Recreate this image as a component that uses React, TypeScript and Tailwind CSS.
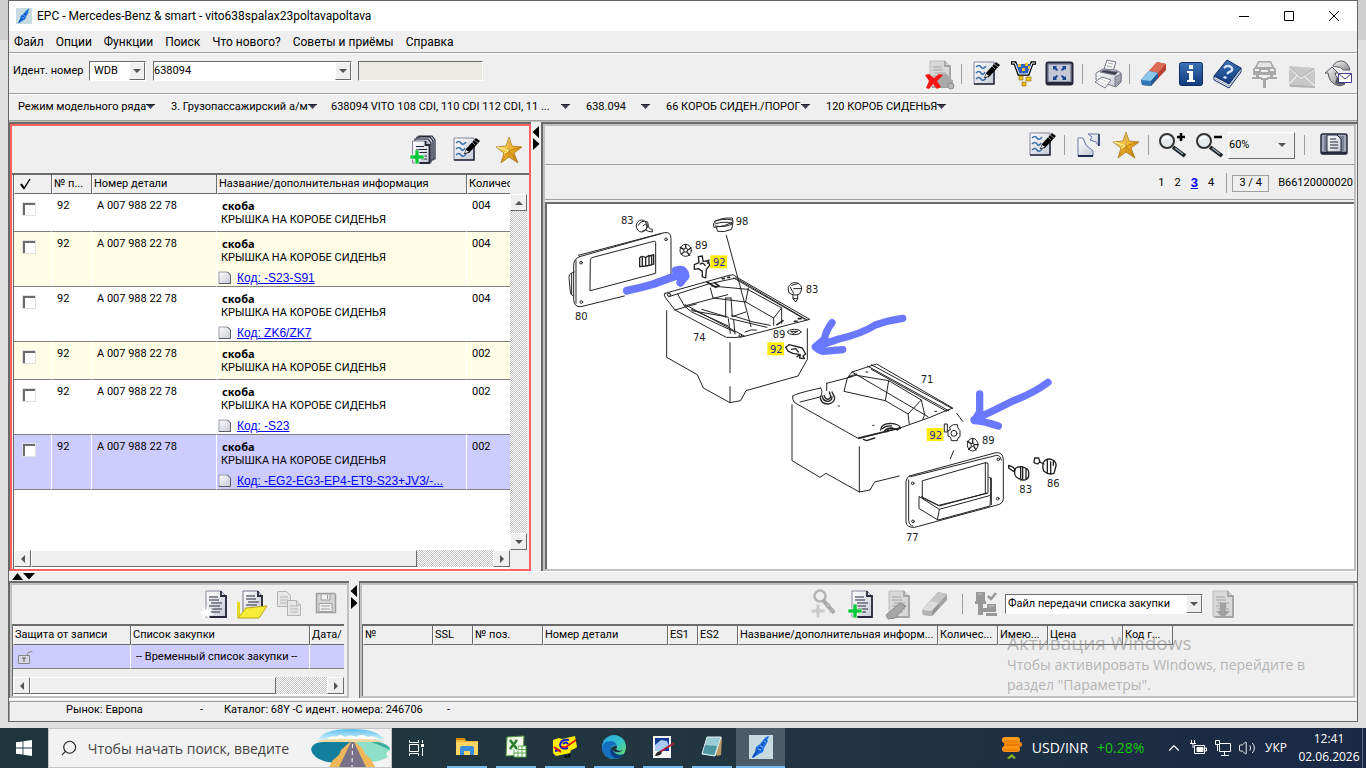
import type { ReactNode } from "react";
import { ChevronUp, Search, Volume2 } from "lucide-react";

const INK = "#26283a";

const parts = [
  { code: "", qty: "004", tone: "bg-white" },
  { code: "Код: -S23-S91", qty: "004", tone: "bg-[#fffde6]" },
  { code: "Код: ZK6/ZK7", qty: "004", tone: "bg-white" },
  { code: "", qty: "002", tone: "bg-[#fffde6]" },
  { code: "Код: -S23", qty: "002", tone: "bg-white" },
  { code: "Код: -EG2-EG3-EP4-ET9-S23+JV3/-...", qty: "002", tone: "bg-[#ccccff]" },
];

const crumbs = [
  { text: "Режим модельного ряда", width: "w-[137px]" },
  { text: "3. Грузопассажирский а/м", width: "w-[144px]" },
  { text: "638094 VITO 108 CDI, 110 CDI 112 CDI, 11 ...", width: "w-[239px]" },
  { text: "638.094", width: "w-16" },
  { text: "66 КОРОБ СИДЕН./ПОРОГ", width: "w-[144px]" },
  { text: "120 КОРОБ СИДЕНЬЯ", width: "w-[119px]" },
];

const orderColumns = [
  { text: "№", width: "w-[70px]" },
  { text: "SSL", width: "w-10" },
  { text: "№ поз.", width: "w-[70px]" },
  { text: "Номер детали", width: "w-[125px]" },
  { text: "ES1", width: "w-[30px]" },
  { text: "ES2", width: "w-10" },
  { text: "Название/дополнительная информ...", width: "w-[200px]" },
  { text: "Количес...", width: "w-[60px]" },
  { text: "Имею...", width: "w-[50px]" },
  { text: "Цена", width: "w-[75px]" },
  { text: "Код г...", width: "w-[50px]" },
];

export default function App() {
  return (
    <div className="flex h-screen min-h-[640px] flex-col overflow-hidden bg-[linear-gradient(#cfcfcf_40px,#e0e0e0_40px)] font-['Roboto','Noto_Sans',sans-serif] text-[11px] leading-[14px] text-black">
      <Defs />
      <div className="flex min-h-0 flex-1 flex-col px-2 pb-[6px]">
        <div className="flex min-h-0 flex-1 flex-col border border-[#666] bg-[#efefef]">
          <TitleBar />
          <MenuBar />
          <MainToolbar />
          <Crumbs />
          <div className="flex min-h-0 flex-1 border-t border-[#c0c0c0]">
            <PartsPanel />
            <SplitterV />
            <ImagePanel />
          </div>
          <SplitterH />
          <div className="flex h-[117px] shrink-0">
            <ListsPanel />
            <SplitterV />
            <OrderPanel />
          </div>
          <StatusBar />
        </div>
      </div>
      <Taskbar />
    </div>
  );
}

function TitleBar() {
  return (
    <header className="flex h-[30px] shrink-0 items-center bg-white pl-[7px] text-[12px]">
      <span className="bg-[#c5dbe0]">
        <PenIcon size={16} />
      </span>
      <h1 className="pl-[5px]">EPC - Mercedes-Benz &amp; smart - vito638spalax23poltavapoltava</h1>
      <div className="ml-auto flex">
        <button aria-label="Свернуть" className="grid h-[30px] w-[45px] place-items-center">
          <svg width="11" height="11" stroke="#000"><path d="M0 5.5h10" /></svg>
        </button>
        <button aria-label="Развернуть" className="grid h-[30px] w-[45px] place-items-center">
          <svg width="11" height="11" fill="none" stroke="#000"><path d="M.5.5h9v9h-9z" /></svg>
        </button>
        <button aria-label="Закрыть" className="grid h-[30px] w-[45px] place-items-center">
          <svg width="11" height="11" stroke="#000"><path d="M0 0l10 10M10 0L0 10" /></svg>
        </button>
      </div>
    </header>
  );
}

function MenuBar() {
  return (
    <nav className="flex h-[22px] shrink-0 items-center gap-3 border-b border-[#a0a0a0] pl-[5px] text-[12px]">
      {["Файл", "Опции", "Функции", "Поиск", "Что нового?", "Советы и приёмы", "Справка"].map((m) => (
        <button key={m}>{m}</button>
      ))}
    </nav>
  );
}

function MainToolbar() {
  return (
    <div className="flex h-[41px] shrink-0 items-center justify-between border-b border-t border-b-[#a0a0a0] border-t-white pl-1">
      <div className="flex items-center pb-[5px]">
        <label htmlFor="wmi" className="w-[76px]">Идент. номер</label>
        <Combo id="wmi" value="WDB" width="w-[57px]" pad="pl-1" />
        <span className="w-[7px]" />
        <Combo id="vin" value="638094" width="w-[199px]" pad="pl-0" />
        <input aria-label="Результат" readOnly className="ml-[6px] h-5 w-[125px] border border-b-white border-l-[#6b6b6b] border-r-white border-t-[#6b6b6b] bg-[#ebebe4]" />
      </div>
      <div className="flex items-center">
        <Tool label="Удалить"><DocIcon muted car /></Tool>
        <Sep />
        <Tool label="Заметки"><NoteIcon /></Tool>
        <Tool label="Корзина"><CartIcon /></Tool>
        <Tool label="Во весь экран"><FullscreenIcon /></Tool>
        <Sep />
        <Tool label="Печать"><PrinterIcon /></Tool>
        <Sep />
        <Tool label="Стереть"><EraserIcon /></Tool>
        <Tool label="Информация"><InfoIcon /></Tool>
        <Tool label="Помощь"><BookIcon /></Tool>
        <Tool label="Автомобиль"><LiftIcon /></Tool>
        <Tool label="Письмо"><MailIcon /></Tool>
        <Tool label="Обновить"><SyncIcon /></Tool>
      </div>
    </div>
  );
}

function Crumbs() {
  return (
    <nav className="flex h-[27px] shrink-0 items-center gap-4 border-b border-t border-b-[#a0a0a0] border-t-white pb-[2px] pl-[9px]">
      {crumbs.map((c) => (
        <button key={c.text} className={`flex items-center justify-between whitespace-nowrap ${c.width}`}>
          <span>{c.text}</span>
          <svg width="9" height="5" className="shrink-0"><path d="M0 0h9L4.500 5z" fill="#3a3a55" /><path d="M0 .5h9" stroke="#222" /></svg>
        </button>
      ))}
    </nav>
  );
}

function Combo({ id, value, width, pad }: { id: string; value: string; width: string; pad: string }) {
  return (
    <span className={`flex h-5 border border-b-white border-l-[#6b6b6b] border-r-white border-t-[#6b6b6b] bg-white ${width}`}>
      <select id={id} aria-label={value} className={`min-w-0 flex-1 appearance-none bg-white outline-none ${pad}`}>
        <option>{value}</option>
      </select>
      <span className="grid w-4 place-items-center border border-b-[#6b6b6b] border-l-white border-r-[#6b6b6b] border-t-white bg-[#efefef]">
        <svg width="8" height="4"><path d="M0 0h8L4 4z" fill="#555" /></svg>
      </span>
    </span>
  );
}

function Tool({ label, children }: { label: string; children: ReactNode }) {
  return (
    <button aria-label={label} className="grid h-8 w-[37px] shrink-0 place-items-center">
      {children}
    </button>
  );
}

function Sep() {
  return <span className="mr-[5px] ml-1 h-5 w-px shrink-0 bg-[#a0a0a0]" />;
}

function SplitterV() {
  return (
    <div className="w-[10px] shrink-0 bg-[#efefef] pt-1">
      <svg width="10" height="26"><path d="M8 0v12L1.500 6zM2 12v12L8.500 18z" /></svg>
    </div>
  );
}

function SplitterH() {
  return (
    <div className="flex h-[10px] shrink-0 items-center border-t border-white pl-[3px]">
      <svg width="24" height="7"><path d="M0 7h11L5.500 0zM11 0h12L17 6.500z" /></svg>
    </div>
  );
}

function ScrollButton({ d }: { d: string }) {
  return (
    <button aria-label="Прокрутка" className="grid h-[17px] w-[17px] shrink-0 place-items-center border border-b-[#6b6b6b] border-l-white border-r-[#6b6b6b] border-t-white bg-[#efefef]">
      <svg width="8" height="8"><path d={d} fill="#555" /></svg>
    </button>
  );
}

function ScrollH({ thumb }: { thumb: string }) {
  return (
    <div className="flex h-[17px] min-w-0 flex-1 bg-[repeating-conic-gradient(#c4c4c4_0_25%,#fff_0_50%)] bg-[length:2px_2px]">
      <ScrollButton d="M6 0v8L2 4z" />
      <span className={`border border-b-[#6b6b6b] border-l-white border-r-[#6b6b6b] border-t-white bg-[#efefef] ${thumb}`} />
      <span className="flex-1" />
      <ScrollButton d="M2 0v8l4-4z" />
    </div>
  );
}

const th = "h-[19px] overflow-hidden whitespace-nowrap border-b border-l border-r border-b-[#6b6b6b] border-l-white border-r-[#6b6b6b] bg-[#efefef] p-0 pl-[1px] text-left font-normal";

function PartsPanel() {
  return (
    <section className="flex w-[522px] shrink-0 flex-col border-l border-t-2 border-[#6b6b6b]">
      <div className="flex min-h-0 flex-1 flex-col border-2 border-[#ff6060]">
        <div className="flex h-[47px] shrink-0 items-center justify-end gap-[6px] pr-[2px]">
          <Tool label="Добавить"><DocIcon stack plus /></Tool>
          <Tool label="Заметки"><NoteIcon /></Tool>
          <Tool label="Избранное"><StarIcon /></Tool>
        </div>
        <div className="flex min-h-0 flex-1 border-t-2 border-[#6b6b6b] pl-px pr-[2px]">
          <div className="flex min-h-0 min-w-0 flex-1 flex-col border-l border-[#6b6b6b]">
            <div className="min-h-0 flex-1 overflow-hidden bg-white">
              <table className="w-full table-fixed border-separate border-spacing-0">
                <colgroup>
                  <col className="w-[38px]" />
                  <col className="w-10" />
                  <col className="w-[125px]" />
                  <col className="w-[250px]" />
                  <col />
                </colgroup>
                <thead>
                  <tr>
                    <th className={th} aria-label="Выбор">
                      <svg width="12" height="12" className="ml-1" fill="none" stroke="#000"><path d="M1 6.500l3 4L10 1" strokeWidth="1.400" /><path d="M1 6l3 4" strokeWidth="2" /></svg>
                    </th>
                    <th className={th}>№ п...</th>
                    <th className={th}>Номер детали</th>
                    <th className={th}>Название/дополнительная информация</th>
                    <th className={`${th} border-r-0`}>Количес</th>
                  </tr>
                </thead>
                <tbody>
                  {parts.map((p, i) => (
                    <tr key={i} className={`align-top ${p.tone}`}>
                      <td className="border-b border-r border-b-[#808080] border-r-white pl-[9px] pt-[9px]">
                        <input type="checkbox" aria-label={`Деталь ${i + 1}`} className="block h-3 w-3 appearance-none border-l-2 border-t-2 border-[#6b6b6b] bg-white outline outline-[#e0e0e0]" />
                      </td>
                      <td className="border-b border-r border-b-[#808080] border-r-white pl-[5px] pt-[5px]">92</td>
                      <td className="border-b border-r border-b-[#808080] border-r-white pl-[5px] pt-[5px]">A 007 988 22 78</td>
                      <td className="border-b border-r border-b-[#808080] border-r-white pt-[5px]">
                        <div className="pl-[5px] font-['Noto_Sans',sans-serif] font-bold">скоба</div>
                        <div className="whitespace-nowrap pl-[4px] pb-[4px]">КРЫШКА НА КОРОБЕ СИДЕНЬЯ</div>
                        {p.code && (
                          <div className="mt-px flex h-4 items-center gap-[5px] pl-[1px] font-['Liberation_Sans',Arial,sans-serif] text-[12px]">
                            <PageIcon />
                            <a href="#code" className="text-[#0000ff] underline">{p.code}</a>
                          </div>
                        )}
                      </td>
                      <td className="border-b border-b-[#808080] pl-[5px] pt-[5px]">{p.qty}</td>
                    </tr>
                  ))}
                </tbody>
              </table>
            </div>
            <div className="flex shrink-0 border-b-2 border-white">
              <ScrollH thumb="w-[386px]" />
            </div>
          </div>
          <div className="flex w-[17px] flex-col pt-[19px]">
            <div className="flex flex-1 flex-col justify-between bg-[repeating-conic-gradient(#c4c4c4_0_25%,#fff_0_50%)] bg-[length:2px_2px]">
              <ScrollButton d="M0 6h8L4 2z" />
              <ScrollButton d="M0 2h8L4 6z" />
            </div>
            <div className="h-[19px]" />
          </div>
        </div>
      </div>
    </section>
  );
}

function ImagePanel() {
  return (
    <section className="flex min-w-0 flex-1 flex-col border-l-2 border-t-2 border-[#6b6b6b] pr-px">
      <div className="flex min-h-0 flex-1 flex-col border-2 border-[#c0c0c0]">
        <div className="flex h-[39px] shrink-0 items-center justify-end border-b border-[#a0a0a0] pr-[2px]">
          <Tool label="Заметки"><NoteIcon /></Tool>
          <Sep />
          <Tool label="Перейти"><JumpIcon /></Tool>
          <Tool label="Избранное"><StarIcon /></Tool>
          <Sep />
          <Tool label="Увеличить"><LensIcon plus /></Tool>
          <Tool label="Уменьшить"><LensIcon /></Tool>
          <span className="flex h-[27px] w-[67px] items-center border border-b-[#6b6b6b] border-l-white border-r-[#6b6b6b] border-t-white bg-[#efefef] pr-2">
            <select aria-label="Масштаб" className="min-w-0 flex-1 appearance-none bg-[#efefef] outline-none">
              <option>60%</option>
            </select>
            <svg width="8" height="4"><path d="M0 0h8L4 4z" fill="#555" /></svg>
          </span>
          <span className="w-[5px]" />
          <Sep />
          <span className="w-[5px]" />
          <Tool label="Просмотр"><PreviewIcon /></Tool>
        </div>
        <div className="flex h-[35px] shrink-0 items-center justify-end border-b border-[#a0a0a0] pr-px pt-[2px]">
          <nav className="flex items-center gap-[10px]">
            <a href="#p1">1</a>
            <a href="#p2">2</a>
            <a href="#p3" className="font-['Liberation_Sans',Arial,sans-serif] text-[13px] font-bold text-[#0000ff] underline">3</a>
            <a href="#p4">4</a>
          </nav>
          <span className="ml-3 h-5 w-px bg-[#a0a0a0]" />
          <span className="ml-[5px] grid h-[17px] w-[37px] place-items-center border border-[#a0a0a0]">3 / 4</span>
          <span className="ml-[9px] min-w-[73px]">B66120000020</span>
        </div>
        <div className="mt-[2px] min-h-0 flex-1 overflow-hidden border-l-2 border-t-2 border-[#6b6b6b] bg-white">
          <Drawing />
        </div>
      </div>
    </section>
  );
}

function Label({ x, y, children, hot }: { x: number; y: number; children: string; hot?: boolean }) {
  return (
    <>
      {hot && <rect x={x - 8} y={y - 33} width="50" height="39" fill="#ffee00" stroke="none" />}
      <text x={x} y={y} fontSize="30" fill={hot ? "#2626b0" : "#222"} stroke="none">{children}</text>
    </>
  );
}

function Drawing() {
  return (
    <svg width="520" height="352" viewBox="0 0 520 352" fill="none" stroke="#222" strokeLinejoin="round" strokeLinecap="round" className="font-['DejaVu_Sans',sans-serif]">
      {/* upper box with its cover, drawn three times larger */}
      <g transform="translate(-2 -4) scale(.33333)" strokeWidth="3">
        <path d="M104 170L358 98q20-4 20 18v116M104 170q-18 6-18 26v104q2 22 22 20l130-32M100 166L350 100M88 216l-10 4q-6 2-6 12l4 44q0 10 10 12M93 180v130M80 222v60" />
        <path d="M136 180q0-6 8-8l182-48q6-2 6 4v92l-196 52z" />
        <circle cx="108" cy="188" r="4" /><circle cx="363" cy="118" r="4" /><circle cx="109" cy="306" r="4" /><circle cx="372" cy="230" r="2" />
        <path d="M284 174q4-6 10-4l8 2v26l-18 2zM304 172l8-6v30l-8 2M314 168l12-4v28l-12 4M292 174v22M320 168v22" strokeWidth="4" />
        <ellipse cx="290" cy="78" rx="16" ry="18" /><path d="M280 76q8-18 28-10l2 12q-6 14-18 16M294 78q8-10 14-2l6 10 8 2v8l-12-2-8-4" />
        <ellipse cx="422" cy="151" rx="17" ry="18" /><circle cx="422" cy="150" r="6" /><path d="M422 144v-10M428 150l10-6M426 156l8 10M417 156l-8 6M416 148l-10-6" strokeWidth="4" />
        <path d="M462 188l-2-18 12-2 2 16 16-2 4 14-10 12-2 26-10-4v-16l-12-8-12 2v-14zM466 192q8-6 14 4M484 184l8-4-4 10" strokeWidth="4" />
        <path d="M506 70q14-18 56-16l2 12q-24 14-56 16zM508 64q24-10 54-4M510 72q26-10 52-2M514 82l4 12q20 4 42-6l4-20M512 78q24 6 50-6" />
        <path d="M544 106L618 380" />
        <path d="M730 262q6-16 24-14 18 6 16 20l-6 14q-18 8-32-4zM736 262l10 18M746 266h24M740 256l20-6M744 286v10l8 10 6-10v-12M744 296h14" />
        <path d="M360 280L552 226q14-6 24 6L794 358 594 410q-24 4-50 2L390 330 362 294q-8-10-2-14zM372 290L490 252l84-18M390 330l64-18M576 236L786 360M566 234L780 358" />
        <path d="M398 282l20 36 130-34M496 264l8 30 98 12 8-42M500 258l108 10M602 306l84 48 24-30-102-56M686 354v22M710 324v46M420 314l178 94M418 318l22 18 130 60M440 328l110 50M542 294v58M558 294l4 56M542 294h16M550 352l-80-24M562 350l40-14M556 356l110 26M560 346l64 20 52 10M550 356l6 44M566 360l4 42M544 350l-104-18M600 396q20-10 34-6" />
        <path d="M486 246l26 16 10-4-14-10M696 374l18-12M748 364h8M760 356h8M532 236h6M548 232h6" strokeWidth="5" />
        <circle cx="372" cy="284" r="5" /><circle cx="586" cy="408" r="4" />
        <path d="M365 332v140l92 52 18 40 80 44 32-6 16-30 156-44 28-50V386M555 428v90M555 560v48" />
        <ellipse cx="748" cy="396" rx="20" ry="8" /><path d="M738 394h20l-12 6z" />
        <path d="M722 442l10-8 40 10 10 18-8 6 4 8-14-2 2-10-22-4-14-6zM740 448l12-2 8 10M762 466l-6 4" strokeWidth="4" />
        <path d="M246 272q40-8 80-20 50-20 94-32M392 212q18-6 24 2l6 14-16 20" stroke="#6a78ff" strokeWidth="24" />
        <Label x={228} y={72}>83</Label><Label x={572} y={74}>98</Label><Label x={450} y={146}>89</Label>
        <Label x={504} y={199} hot>92</Label><Label x={782} y={278}>83</Label><Label x={90} y={360}>80</Label>
        <Label x={444} y={423}>74</Label><Label x={683} y={415}>89</Label><Label x={675} y={460} hot>92</Label>
      </g>
      {/* lower box, its frame and both pointer arrows */}
      <g transform="translate(233 76) scale(.33333)" strokeWidth="3">
        <path d="M38 348q2-6 84-24M140 310l76-20M38 348q-2 12 6 20L236 476 360 444 450 412 518 384 290 252 216 276 202 294M60 366L116 352M262 258L506 392M274 254L518 386M274 268L500 394M216 276L444 410M140 310v22M122 324q8 8 0 26" />
        <path d="M120 350q2 22 24 22 20-2 20-20l-8-16M126 348q4 16 18 16 12-2 12-14M132 346q4 12 12 12 8-2 8-10l-4-12" strokeWidth="4" />
        <path d="M302 450q2-20 30-20 26 2 30 14l-10 6q-12-8-26-4l-6 10M308 446q8-10 26-8M314 452q8-10 24-8M236 474l124-30M250 478l10 4 24-8" strokeWidth="4" />
        <path d="M202 294L192 334 316 362 326 302 230 286zM316 362L384 402 424 360 326 302M384 402l4 30M424 360l10 44-6 14M174 378h4M278 436h4M258 276h6M464 394h6M206 290l24-8" />
        <path d="M36 374v168l84 50 18-12 100 56 32-6 14-24 74-18M238 500v136M530 400l18 24M521 512l-10 24" />
        <path d="M494 432h8v24h-8zM510 440l10-6h12l2 10 6 8v18l-6 4-2 8h-18l-2-10-8-4v-16l6-2z" /><circle cx="522" cy="460" r="9" />
        <ellipse cx="578" cy="494" rx="16" ry="19" /><circle cx="578" cy="494" r="5" /><path d="M578 489v-12M584 494h10M582 500l6 10M574 500l-8 8M572 490l-10-6" strokeWidth="4" />
        <path d="M388 588L648 518q20-2 22 20v118q0 16-22 20L404 742q-24 2-26-16V604q2-12 10-16zM386 600v120q2 18 12 18M392 590L650 526q12 0 14 14" />
        <circle cx="398" cy="610" r="4" /><circle cx="655" cy="538" r="4" /><circle cx="399" cy="724" r="4" /><circle cx="653" cy="656" r="4" />
        <path d="M428 602L616 548l8 2v88L478 678 428 654zM616 548v90M418 650l60 38 154-42-2 32-156 42-56-34zM478 688l-6 32M632 646V594l-6-2M634 594v80M424 650l52 26 146-36" />
        <path d="M686 556l14 6 6 8-6 4-14-10zM704 570q4-12 22-10 20 6 20 16v14q-6 12-18 10-22-6-24-18zM722 560v40M738 566v32M728 560v40" strokeWidth="4" />
        <path d="M764 534h12l4 12-8 6-10-4zM778 546l14 6M790 548q8-14 24-10 16 6 14 20l-6 22q-16 6-30-6-6-10-2-26zM802 540v40M812 546v34M820 544v12" strokeWidth="4" />
        <g stroke="#6a78ff" strokeWidth="22">
          <path d="M368 115q-44 6-82 20-40 26-110 42l-70 24M156 128q-20 26-22 48l-28 24q10 12 24 14l58-5" />
          <path d="M804 307q-46 34-106 56-50 26-116 56M599 342v54l-16 26q30 2 72 16" />
        </g>
        <Label x={422} y={310}>71</Label><Label x={448} y={477} hot>92</Label><Label x={606} y={491}>89</Label>
        <Label x={718} y={640}>83</Label><Label x={801} y={622}>86</Label><Label x={378} y={784}>77</Label>
      </g>
    </svg>
  );
}

function ListsPanel() {
  return (
    <section className="flex w-[340px] shrink-0 flex-col border-l border-t-2 border-[#6b6b6b]">
      <div className="flex min-h-0 flex-1 flex-col border-2 border-[#c0c0c0] pr-[3px]">
        <div className="flex h-[39px] shrink-0 items-center justify-end pb-[2px]">
          <Tool label="Новый список"><DocIcon spark /></Tool>
          <Tool label="Открыть список"><FolderIcon /></Tool>
          <Tool label="Копировать"><CopyIcon /></Tool>
          <Tool label="Сохранить"><FloppyIcon /></Tool>
        </div>
        <div className="flex min-h-0 flex-1 flex-col border-l border-t-2 border-[#6b6b6b]">
          <table className="w-full table-fixed border-separate border-spacing-0">
            <colgroup>
              <col className="w-[118px]" />
              <col className="w-[179px]" />
              <col />
            </colgroup>
            <thead>
              <tr>
                <th className={th}>Защита от записи</th>
                <th className={th}>Список закупки</th>
                <th className={`${th} border-r-0`}>Дата/</th>
              </tr>
            </thead>
            <tbody>
              <tr className="bg-[#ccccff]">
                <td className="h-6 border-b border-r border-b-[#808080] border-r-white pl-1">
                  <svg width="17" height="14" fill="#d8d8e8" stroke="#888"><path d="M1.500 5.500h11v8h-11z" /><path d="M10.500 5V3.500q0-2 5-2" fill="none" /><path d="M5 8h4M7 8v4" stroke="#555" /></svg>
                </td>
                <td className="h-6 whitespace-nowrap border-b border-r border-b-[#808080] border-r-white pl-[5px]">-- Временный список закупки --</td>
                <td className="h-6 border-b border-b-[#808080]" />
              </tr>
            </tbody>
          </table>
          <div className="mt-auto flex border-b-2 border-white">
            <ScrollH thumb="w-[246px]" />
          </div>
        </div>
      </div>
    </section>
  );
}

function OrderPanel() {
  return (
    <section className="flex min-w-0 flex-1 flex-col border-l border-t-2 border-[#6b6b6b] pr-[2px]">
      <div className="relative flex min-h-0 flex-1 flex-col border-2 border-[#c0c0c0]">
        <div className="flex h-[39px] shrink-0 items-center pl-[443px] pb-[2px]">
          <Tool label="Ключ"><KeyIcon /></Tool>
          <Tool label="Добавить позицию"><DocIcon plus /></Tool>
          <Tool label="Стереть позицию"><DocIcon muted eraser /></Tool>
          <Tool label="Стереть всё"><EraserIcon muted /></Tool>
          <span className="w-[5px]" />
          <Sep />
          <Tool label="Передача"><TransferIcon /></Tool>
          <Combo id="transfer" value="Файл передачи списка закупки" width="w-[198px]" pad="pl-[2px]" />
          <Tool label="Выгрузить"><DocIcon muted arrow /></Tool>
        </div>
        <div className="min-h-0 flex-1 border-l border-t-2 border-[#6b6b6b]">
          <table className="w-[810px] table-fixed border-separate border-spacing-0">
            <thead>
              <tr>
                {orderColumns.map((c) => (
                  <th key={c.text} className={`${th} ${c.width}`}>{c.text}</th>
                ))}
              </tr>
            </thead>
          </table>
        </div>
        <aside className="absolute right-[44px] top-[46px] w-[302px] whitespace-nowrap font-['Open_Sans',sans-serif] text-[14px] leading-5 text-[#8a8a8a]/60">
          <div className="text-[19px] leading-6">Активация Windows</div>
          <div>Чтобы активировать Windows, перейдите в</div>
          <div>раздел "Параметры".</div>
        </aside>
      </div>
    </section>
  );
}

function StatusBar() {
  return (
    <footer className="flex h-[23px] shrink-0 items-center border-t-2 border-white">
      <div className="flex h-5 flex-1 items-center border-l border-t border-[#a0a0a0] pb-[2px] pl-14">
        <span className="w-[134px]">Рынок: Европа</span>
        <span className="w-6">-</span>
        <span className="w-[223px]">Каталог: 68Y -C идент. номера: 246706</span>
        <span>-</span>
      </div>
    </footer>
  );
}

function TaskItem({ label, active, children }: { label: string; active?: boolean; children: ReactNode }) {
  return (
    <button aria-label={label} className={`flex h-10 w-[49px] flex-col items-center justify-between ${active ? "bg-[#4a5c68]" : ""}`}>
      <span className="grid flex-1 place-items-center">{children}</span>
      <span className={`h-[2px] bg-[#76b9ed] ${active ? "w-full" : "w-10"}`} />
    </button>
  );
}

function Taskbar() {
  return (
    <footer className="flex h-10 shrink-0 items-center bg-linear-to-r from-[#1f353d] via-[#213640] to-[#1a2845] font-['Open_Sans',sans-serif] text-white">
      <button aria-label="Пуск" className="grid h-10 w-12 place-items-center">
        <svg width="16" height="16" fill="#fff"><path d="M0 2.300L6.600 1.400v6.200H0zM7.400 1.300L16 0v7.600H7.400zM0 8.400h6.600v6.200L0 13.700zM7.400 8.400H16V16l-8.600-1.300z" /></svg>
      </button>
      <label className="flex h-10 w-[344px] items-center border border-[#c4c4c4] bg-[#f2f2f2] pl-[11px] text-[#222]">
        <Search size={18} strokeWidth={1.5} className="-scale-x-100" />
        <input placeholder="Чтобы начать поиск, введите" className="ml-[10px] w-[225px] bg-transparent text-[14px] outline-none placeholder:text-[#444]" />
        <RoadIcon />
      </label>
      <button aria-label="Представление задач" className="grid h-10 w-12 place-items-center">
        <svg width="17" height="16" fill="none" stroke="#fff"><path d="M1.500 4.500h9v7h-9zM1.500 0v2.500h9V0M1.500 16v-2.500h9V16M14.500 0v3M14.500 8v8" /><path d="M13 4h3v3h-3z" fill="#fff" stroke="none" /></svg>
      </button>
      <div className="flex pl-[2px]">
        <TaskItem label="Проводник">
          <svg width="22" height="20"><path d="M0 1h8l2 3h12v14H0z" fill="#f5b83d" /><path d="M0 1h8l2 2H0z" fill="#d98a00" /><path d="M0 5h22v13H0z" fill="#ffd563" /><path d="M4 18v-7q0-2 2-2h10q2 0 2 2v7h-4v-4H8v4z" fill="#3a8fdc" /></svg>
        </TaskItem>
        <TaskItem label="Excel">
          <svg width="24" height="24"><path d="M3 2l17-1-1 19-17 1z" fill="#f4faf0" stroke="#4c9a3c" /><path d="M10 11h12v11H10z" fill="#fff" stroke="#5aa84a" /><path d="M10 14.500h12M10 18h12M14 11v11M18 11v11" stroke="#5aa84a" /><path d="M5 4h9v11H5z" fill="#dff0d8" /><path d="M6 5l7 9M13 5l-7 9" stroke="#2e7d32" strokeWidth="2.500" /></svg>
        </TaskItem>
        <TaskItem label="Каталог">
          <svg width="26" height="24"><path d="M1 5l6-2 3 1 13-3 2 11-3 2-3 1-1 3-14 3-3-3z" fill="#ffee00" /><path d="M3 13l5 3M3 16l4-1M17 5q-8-1-9 5 1 5 8 3M11 9q3-3 5 0" fill="none" stroke="#1414e0" strokeWidth="2" /><path d="M2 12l7 5M9 12h5l10-7" fill="none" stroke="#e01010" strokeWidth="1.600" /><path d="M12 20l2 3 1-3M17 20v3M16 20h3" fill="none" stroke="#000" /></svg>
        </TaskItem>
        <TaskItem label="Edge">
          <svg width="24" height="24"><circle cx="12" cy="12" r="12" fill="url(#edge)" /><path d="M0 13Q1 6 8 6q6 0 7 5-3-2-6 1-2 4 2 7 5 3 11 0-4 5-10 5Q1 23 0 13z" fill="#1570c4" /><path d="M9 12q-3 7 4 11 6 1 9-4-7 2-10-2-2-2-3-5z" fill="#0c3f82" /><path d="M15 11q0 3-1 3 2 3 7 1l-3 2q-7 1-9-4 3-3 6-2z" fill="#213640" /></svg>
        </TaskItem>
        <TaskItem label="Paint">
          <svg width="24" height="24"><path d="M2 1h18v22H2z" fill="#f4f4f4" /><path d="M4 3h14v13H4z" fill="#123b96" /><path d="M4 10l6-5 6 1 2 5-8 5H4z" fill="#a9c8f2" /><path d="M9 17l14-9" stroke="#b02035" strokeWidth="2" /><path d="M4 21q1-4 5-5l2 2q-2 3-7 3z" fill="#222" /></svg>
        </TaskItem>
        <TaskItem label="Блокнот">
          <svg width="24" height="24"><path d="M8 3l14-1-1 18-4 1z" fill="#b89a62" /><path d="M7 2h14l-6 19-13-2z" fill="#9ccdd4" stroke="#e2f2f4" /><path d="M5 10l12 1-3 9-11-2z" fill="#4e96a2" /></svg>
        </TaskItem>
        <TaskItem label="EPC" active>
          <span className="bg-[#c5dbe0]"><PenIcon size={24} /></span>
        </TaskItem>
      </div>
      <div className="ml-auto flex items-center text-[14px]">
        <svg width="22" height="24"><rect x="1" y="1" width="18" height="6" rx="3" fill="#ff9d1a" /><rect x="3" y="6" width="18" height="5" rx="2.500" fill="#f58a0a" /><rect x="1" y="10" width="18" height="6" rx="3" fill="#ff9410" /><path d="M3 5h14M5 9h14M3 14h14" stroke="#d86f00" /><path d="M6 22l5-4 4 4-2 1-2-2-3 2z" fill="#84b820" /></svg>
        <span className="pl-[9px]">USD/INR</span>
        <span className="w-[77px] pl-[9px] text-[#16c60c]">+0.28%</span>
        <ChevronUp size={18} strokeWidth={1.5} />
        <svg width="17" height="16" fill="none" stroke="#fff" className="ml-[7px]"><path d="M4.500 5.500h10v8h-10zM15 8h1.500v3H15M1.500 0v3M4.500 0v3M0 3.500h6M3 4v4" /><path d="M7 7.500h6v4H7z" fill="#fff" /></svg>
        <svg width="17" height="16" fill="none" stroke="#fff" className="ml-2"><path d="M4.500 3.500h11v8h-11zM9.500 12v3M6 15.500h8M.5.500h4v4h-4zM2.500 5v6" /></svg>
        <Volume2 size={18} strokeWidth={1.2} className="ml-[6px]" />
        <span className="ml-[9px] text-[12px]">УКР</span>
        <time className="ml-[9px] w-[66px] text-center text-[12px] leading-[18px]">12:41<br />02.06.2026</time>
        <span className="h-10 w-px bg-[#60708a]" />
        <span className="w-[3px]" />
      </div>
    </footer>
  );
}

/* icons */

function Defs() {
  return (
    <svg className="absolute h-0 w-0" aria-hidden="true">
      <defs>
        <linearGradient id="paper" x2="1" y2="1"><stop stopColor="#fff" /><stop offset="1" stopColor="#c6c8d4" /></linearGradient>
        <linearGradient id="steel" x2="1" y2="1"><stop stopColor="#f4f4f4" /><stop offset="1" stopColor="#8c8c8c" /></linearGradient>
        <linearGradient id="gold" x2="1" y2="1"><stop stopColor="#fff3a0" /><stop offset=".5" stopColor="#f3b62a" /><stop offset="1" stopColor="#b06f08" /></linearGradient>
        <linearGradient id="blue" x2="0" y2="1"><stop stopColor="#3d72b8" /><stop offset="1" stopColor="#12397c" /></linearGradient>
        <linearGradient id="edge" x2="1" y2="1"><stop stopColor="#2aa7e6" /><stop offset=".5" stopColor="#33c3c8" /><stop offset="1" stopColor="#6fdc5c" /></linearGradient>
        <linearGradient id="sky" x2="0" y2="1"><stop stopColor="#5ac0ee" /><stop offset="1" stopColor="#eefaff" /></linearGradient>
      </defs>
    </svg>
  );
}

function PenIcon({ size }: { size: number }) {
  return (
    <svg width={size} height={size} viewBox="0 0 24 24" className="block">
      <path d="M19 1l1 1-2 3 1 1-4 7-1 4-4 2-6 4-1-1 3-5 1-5 4-3 5-6z" fill="#1b6fe0" />
      <path d="M17 5l-7 9-6 8" fill="none" stroke="#0a48b4" strokeWidth="1.400" />
      <path d="M9 14l3 1M11 11l3 1M15 6l2 1" stroke="#8cc4ff" />
    </svg>
  );
}

function PageIcon() {
  return (
    <svg width="14" height="14" className="shrink-0"><path d="M1 1h8.500L12.500 4v8.500H1z" fill="url(#paper)" stroke="#9a9ca8" /><path d="M9.500 1l3 3v8.500H1" fill="none" stroke="#5c5e6c" /></svg>
  );
}

function DocIcon({ stack, plus, muted, spark, car, eraser, arrow }: {
  stack?: boolean; plus?: boolean; muted?: boolean; spark?: boolean; car?: boolean; eraser?: boolean; arrow?: boolean;
}) {
  const line = muted ? "#a4a4a4" : INK;
  return (
    <svg width="32" height="32" fill="none" stroke={line}>
      {stack && <path d="M12 4V2h13l3 4v19h-2M10 5V3h13l3 4v19h-2M8 7V5h13l3 4v19h-2" fill="#c8cad4" strokeWidth="1.200" />}
      <path d={stack ? "M5.500 7h13l4 4v18h-17z" : "M7 3h15l5 5v21H7z"} fill={muted ? "#d8d8d8" : "url(#paper)"} stroke={muted ? "#bcbcbc" : "#85879a"} />
      <path d={stack ? "M18.500 7v4h4v18H8" : "M22 3v5h5v21H9"} strokeWidth="1.800" />
      <path d={stack ? "M9 12.500h8M9 15.500h11M9 18.500h11M12 22h8M14 25h6" : "M10 9h9M10 12h10M12 15h11M10 18h11M12 21h11M12 24h9"} />
      {plus && <path d="M3 21h5v-5h4v5h5v4h-5v5H8v-5H3z" fill="#00c837" stroke="#fff" strokeWidth=".6" />}
      {spark && <path d="M8 17l1 5 5-2-3 4 4 2-5 1 1 4-4-3-4 3 1-5-4-1 5-2-3-4 5 3z" fill="#fff" stroke="none" />}
      {car && (
        <>
          <path d="M12 21l4-5h8l3 5 3 1v5l-3 2H12z" fill="#a8a8a8" stroke="none" />
          <circle cx="28" cy="28" r="3" fill="#b8b8b8" stroke="#8c8c8c" />
          <path d="M2 17l4-1 5 4 5-4 4 1-6 6 4 6-4 2-4-5-4 5-3-1 3-7z" fill="#fb1414" stroke="none" />
        </>
      )}
      {eraser && <path d="M4 27l14-12 6 3-11 12-7 1z" fill="#a6a6a6" stroke="#8c8c8c" />}
      {arrow && <path d="M14 15h6v8h4l-7 7-7-7h4z" fill="#a0a0a0" stroke="none" />}
    </svg>
  );
}

function NoteIcon() {
  return (
    <svg width="32" height="32" fill="none">
      <path d="M4 4h20v22H4z" fill="url(#paper)" stroke="#82859a" /><path d="M24 10v16H4" stroke={INK} strokeWidth="1.500" />
      <path d="M6 9q3-3 5 0t5-1M6 15q3-3 5 0t4-1M6 21q3-3 5 0t5-1" stroke="#3a6ea8" strokeWidth="1.500" />
      <path d="M14 20l2-5L26 4l4 3-11 12z" fill="#000" /><path d="M16 16l3 2-4 1z" fill="#fff" /><path d="M24 6l4 3M22 8l3 3" stroke="#888" />
    </svg>
  );
}

function CartIcon() {
  return (
    <svg width="32" height="32">
      <path d="M4 5h4l4 11h9l4-11h4" fill="none" stroke="#000" strokeWidth="3.500" /><path d="M8 6h17l-4 10h-9z" fill="#2d5fc0" /><path d="M5 5h3l4 11h9l4-11h3" fill="none" stroke="#fff" />
      <path d="M11 6h3v3h-3zM18 5h3v3h-3zM15 10h3v3h-3zM21 8h2v3h-2z" fill="#f2c01e" /><path d="M12 18h4v4h-4zM19 19h5v4h-5zM15 24h4v4h-4z" fill="#f2c01e" stroke="#8a6500" strokeWidth=".6" />
    </svg>
  );
}

function FullscreenIcon() {
  return (
    <svg width="32" height="32">
      <rect x="2.500" y="4.500" width="26" height="22" rx="2" fill="#8f93a6" stroke={INK} strokeWidth="2" /><path d="M5 7h21v16H5z" fill="#c4c7d6" /><path d="M3 24h25v3H3z" fill={INK} />
      <path d="M9 8h4l-1 1 2 3-1 1-3-2-1 1zM22 8v4l-1-1-3 2-1-1 2-3-1-1zM9 22v-4l1 1 3-2 1 1-2 3 1 1zM22 22h-4l1-1-2-3 1-1 3 2 1-1z" fill="#1c4692" />
    </svg>
  );
}

function PrinterIcon() {
  return (
    <svg width="32" height="32" stroke="#77798a">
      <path d="M13 11l3-9 9 2-3 9z" fill="#f4f4f4" /><path d="M17 5l5 1M16 8l5 1" stroke="#aaa" />
      <path d="M5 15l7-4 13 1 5 3v9l-5 5-20-7z" fill="url(#paper)" /><path d="M9 14l15 3 3-3-14-2z" fill="#3c3e4c" /><path d="M24 19v9l6-5v-7z" fill="#a4a6b2" />
      <path d="M4 24l7-5 9 3-6 8z" fill="#fff" /><path d="M7 23l8 4M10 21l7 3" stroke="#ccc" />
    </svg>
  );
}

function EraserIcon({ muted }: { muted?: boolean }) {
  return (
    <svg width="32" height="32">
      <path d="M3 22L19 4l9 2v6L13 28l-9-1z" fill={muted ? "#a4a4a4" : "#b8402e"} /><path d="M3 22L19 4l9 2-15 17z" fill={muted ? "#c6c6c6" : "#dc6c58"} />
      <path d="M3 22l8-9 9 2-7 8v5l-9-1z" fill={muted ? "#b4b4b4" : "#2c78b8"} /><path d="M3 22l8-9 9 2-7 8z" fill={muted ? "#dcdcdc" : "#8cc8ec"} /><path d="M13 23l7-8v5l-7 8z" fill={muted ? "#949494" : "#1c5c98"} />
    </svg>
  );
}

function InfoIcon() {
  return (
    <svg width="32" height="32">
      <rect x="4.500" y="4.500" width="23" height="23" rx="2" fill="url(#blue)" stroke="#0f2e66" /><path d="M14 7h4v4h-4zM12 13h6v9h2v2h-8v-2h2v-7h-2z" fill="#fff" />
    </svg>
  );
}

function BookIcon() {
  return (
    <svg width="32" height="32">
      <path d="M2 18L15 2l14 8-12 16z" fill="url(#blue)" stroke="#0f2e66" /><path d="M2 18l15 8 12-16v4L17 30 2 22z" fill="#e8ecf4" stroke="#0f2e66" /><path d="M2 20l15 8 12-16" fill="none" stroke="#9aa6c0" />
      <path d="M12 10q4-4 8 0 1 3-3 4l-2 2" fill="none" stroke="#dce8ff" strokeWidth="2.200" /><path d="M12 18l3 1-1 2-3-1z" fill="#dce8ff" />
    </svg>
  );
}

function LiftIcon() {
  return (
    <svg width="32" height="32" fill="#a8a8a8">
      <path d="M6 9l3-6h13l3 6 2 2v6h-3v2h-3v-2H10v2H7v-2H4v-6z" /><path d="M10 4.500h11l2 4.500H8z" fill="#e6e6e6" /><path d="M6 11h4v2H6zM21 11h4v2h-4zM12 12h7v2h-7z" fill="#efefef" />
      <path d="M3 19h10v2H3zM18 19h10v2H18zM12 20h7v2h-2v8h-3v-8h-2z" />
    </svg>
  );
}

function MailIcon() {
  return (
    <svg width="32" height="32"><path d="M3 8l26 2v18L3 26z" fill="#c8c8c8" /><path d="M4 29l25 1v-2L3 26z" fill="#b4b4b4" /><path d="M3 9l12 11 14-9M3 26l9-9M29 28l-11-10" fill="none" stroke="#e8e8e8" strokeWidth="1.500" /><path d="M4 9l11 10 13-8" fill="none" stroke="#aaa" /></svg>
  );
}

function SyncIcon() {
  return (
    <svg width="32" height="32">
      <path d="M10 8q2-5 9-5 6 1 8 9h-7q-2-3-5-3z" fill="url(#steel)" stroke="#5c6068" /><path d="M2 15l7-6 6 6h-3q1 6 7 6l3 5q-4 3-9 1-7-3-8-12z" fill="url(#steel)" stroke="#50545c" /><path d="M12 25q5 3 10 0l-2-5q-4 1-6-1z" fill="#50565e" />
      <path d="M15.500 15.500h13v9h-13z" fill="#fff" stroke="#403c8c" /><path d="M16 16l6 5 6-5" fill="none" stroke="#403c8c" />
    </svg>
  );
}

function StarIcon() {
  return (
    <svg width="32" height="32"><path d="M16 3l3 9 10 1-8 6 4 10-9-6-8 6 3-10-8-6 10-1z" fill="url(#gold)" stroke="#a87820" strokeWidth=".8" /><path d="M16 4v13L4 13M11 19l5-2" fill="none" stroke="#fff2b0" /><path d="M16 4v13l12-4M16 17l8 10M16 17v6M16 17L9 27" fill="none" stroke="#b87a14" strokeWidth=".8" /></svg>
  );
}

function JumpIcon() {
  return (
    <svg width="32" height="32" stroke="#6474ac"><path d="M5 9h5l3 7 7 6v5H5z" fill="url(#paper)" /><path d="M20 27H5" stroke="#202c54" strokeWidth="2" /><path d="M15 5h11v12l-3-4-6-2 2-3z" fill="url(#paper)" /><path d="M26 5v12" stroke="#202c54" strokeWidth="1.500" /></svg>
  );
}

function LensIcon({ plus }: { plus?: boolean }) {
  return (
    <svg width="32" height="32"><circle cx="10" cy="12" r="7" fill="#e4eaee" stroke="#333" strokeWidth="2" /><path d="M6 11q2-4 6-2" stroke="#fff" strokeWidth="2" fill="none" /><path d="M16 18l12 9" stroke="#222" strokeWidth="4" /><path d="M18 19l8 6" stroke="#8ca4b4" strokeWidth="1.500" /><path d="M20 8h8" stroke="#000" strokeWidth="2.500" />{plus && <path d="M24 4v8" stroke="#000" strokeWidth="2.500" />}</svg>
  );
}

function PreviewIcon() {
  return (
    <svg width="32" height="32"><rect x="3" y="5" width="26" height="20" rx="2" fill="#a4a8b8" stroke={INK} strokeWidth="1.500" /><path d="M6 7h20v15H6z" fill="#7c8094" /><path d="M9 6h10l4 4v13H9z" fill="url(#paper)" stroke={INK} /><path d="M12 10h6M12 13h8M12 16h8M12 19h8" stroke={INK} /><path d="M3 24h26" stroke={INK} strokeWidth="2.500" /></svg>
  );
}

function FolderIcon() {
  return (
    <svg width="32" height="32"><path d="M7 3h15l4 5v16H7z" fill="url(#paper)" stroke="#70728a" /><path d="M22 3v5h4v14" fill="none" stroke={INK} strokeWidth="1.800" /><path d="M10 8h9M10 11h10M12 14h11M10 17h11" stroke={INK} /><path d="M1 14h3v16H1z" fill="#e6d820" /><path d="M2 30l8-10 21-2-8 12z" fill="#f7ee3a" stroke="#b8a810" /></svg>
  );
}

function CopyIcon() {
  return (
    <svg width="32" height="32" stroke="#b4b4b4" fill="#e6e6e6"><path d="M4.500 3.500h9l4 4v11h-13z" /><path d="M7 9h8M7 12h8M7 15h7" /><path d="M14.500 12.500h9l4 4v11h-13z" /><path d="M17 18h8M17 21h8M17 24h8M23.500 13v4h4" /></svg>
  );
}

function FloppyIcon() {
  return (
    <svg width="32" height="32" stroke="#a0a0a0" fill="#d4d4d4"><path d="M6.500 5.500h18l1 1v18h-19z" strokeWidth="1.500" /><path d="M11 6h9v6h-9zM9 15.500h13v8H9z" fill="#f0f0f0" /><path d="M17.500 7v4M11 18h9M11 21h9" /></svg>
  );
}

function KeyIcon() {
  return (
    <svg width="32" height="32" fill="none"><circle cx="12" cy="8" r="5.500" stroke="#b4b4b4" strokeWidth="2.500" /><path d="M15 12l11 13" stroke="#a8a8a8" strokeWidth="4" /><path d="M22 24l4-3M18 19l4-3" stroke="#b4b4b4" strokeWidth="3" /><path d="M3 21h5v-5h4v5h5v4h-5v5H8v-5H3z" fill="#cacaca" stroke="#efefef" /></svg>
  );
}

function TransferIcon() {
  return (
    <svg width="32" height="32" fill="#989898"><path d="M5 4h9v9H5zM16 16h9v8h-9zM15 25h11v3H15zM7 13h5v14H7zM10 20h7v4h-7zM4 13h11v3H4z" /><path d="M17 8l3 3 5-6" fill="none" stroke="#989898" strokeWidth="2.500" /><path d="M7 6h4M18 18h5" stroke="#ccc" /></svg>
  );
}

function RoadIcon() {
  return (
    <svg width="80" height="38" viewBox="0 0 80 38" className="shrink-0">
      <path d="M6 13Q10 0 40 0t34 13z" fill="url(#sky)" /><path d="M16 10q5-4 9-2 5-4 9 0 6-3 11 0 6-4 12 0 6-2 10 2z" fill="#fff" />
      <path d="M0 20q2-7 12-7h28L24 34Q2 32 0 20z" fill="#12809c" /><path d="M42 13h25q12 2 12 8-6 3-2 7-8 5-20 5z" fill="#8fe0c8" /><path d="M60 13h8q11 3 11 8-8-4-19-8z" fill="#3cae9c" />
      <path d="M4 13q12-4 36-3 24-1 34 3z" fill="#f4d9a0" /><path d="M39 13l-9 8-2 5-6 5-4 7h46l-4-8-6-5-2-5-8-7z" fill="#f0b65a" /><path d="M40 13L28 38h27L43 13z" fill="#7a7288" /><path d="M41.500 15L41 38" stroke="#fff" strokeDasharray="4 3" />
    </svg>
  );
}
